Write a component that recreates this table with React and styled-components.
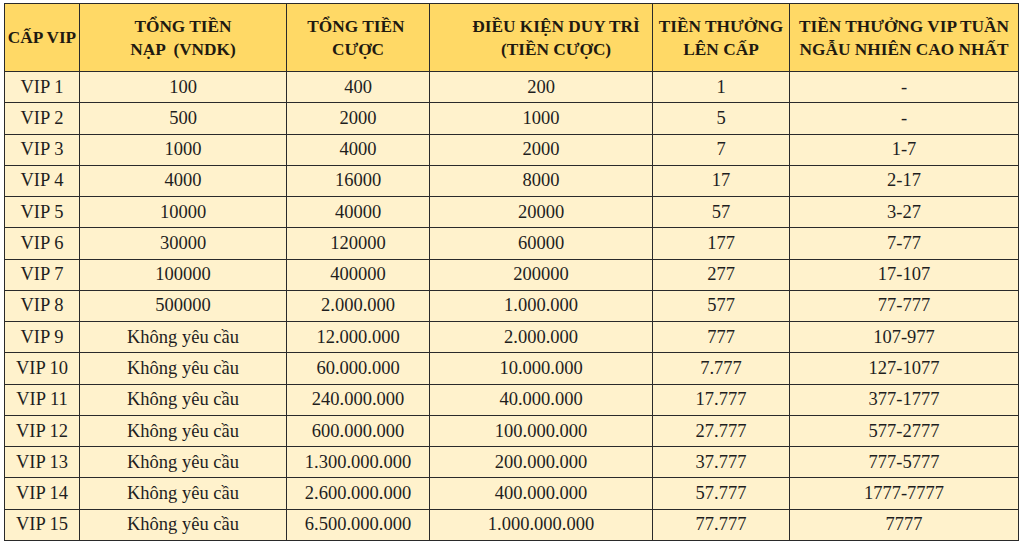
import React from "react";
import styled, { createGlobalStyle } from "styled-components";

const SERIF = `"Liberation Serif", "Times New Roman", "DejaVu Serif", serif`;

const Global = createGlobalStyle`
  html, body { margin: 0; padding: 0; background: #ffffff; }
  body { font-family: ${SERIF}; color: #1e1e1e; }
`;

const Page = styled.div`
  padding: 3px 5px 0 4px;
`;

const Table = styled.table`
  border-collapse: collapse;
  table-layout: fixed;
  width: 1015px;
  border: 1px solid #2a2a2a;
  font-family: ${SERIF};
`;

const HeadRow = styled.tr`
  height: 68px;
  background: #ffd966;
`;

const HeadCell = styled.th`
  border: 1px solid #2a2a2a;
  font-family: ${SERIF};
  font-size: 17.3px;
  font-weight: bold;
  line-height: 23px;
  text-align: center;
  vertical-align: middle;
  padding: 0 0 0 ${(p) => p.$shift || 0}px;
  white-space: pre;
  overflow: visible;
  color: #1f1a10;
`;

const Row = styled.tr`
  height: 31.27px;
  background: #fff2cc;
`;

const Cell = styled.td`
  border: 1px solid #2a2a2a;
  font-family: ${SERIF};
  font-size: 18.5px;
  text-align: center;
  vertical-align: middle;
  padding: 0;
  color: #1e1e1e;
  white-space: nowrap;
`;

const widths = [75, 207, 143, 223, 137, 229];

const headers = [
  { t: "CẤP VIP" },
  { t: "TỔNG TIỀN\nNẠP  (VNDK)" },
  { t: "TỔNG TIỀN \nCƯỢC" },
  { t: "ĐIỀU KIỆN DUY TRÌ\n(TIỀN CƯỢC)", shift: 30 },
  { t: "TIỀN THƯỞNG\nLÊN CẤP" },
  { t: "TIỀN THƯỞNG VIP TUẦN\nNGẪU NHIÊN CAO NHẤT" },
];

const NR = "Không yêu cầu";
const rows = [
  ["VIP 1", "100", "400", "200", "1", "-"],
  ["VIP 2", "500", "2000", "1000", "5", "-"],
  ["VIP 3", "1000", "4000", "2000", "7", "1-7"],
  ["VIP 4", "4000", "16000", "8000", "17", "2-17"],
  ["VIP 5", "10000", "40000", "20000", "57", "3-27"],
  ["VIP 6", "30000", "120000", "60000", "177", "7-77"],
  ["VIP 7", "100000", "400000", "200000", "277", "17-107"],
  ["VIP 8", "500000", "2.000.000", "1.000.000", "577", "77-777"],
  ["VIP 9", NR, "12.000.000", "2.000.000", "777", "107-977"],
  ["VIP 10", NR, "60.000.000", "10.000.000", "7.777", "127-1077"],
  ["VIP 11", NR, "240.000.000", "40.000.000", "17.777", "377-1777"],
  ["VIP 12", NR, "600.000.000", "100.000.000", "27.777", "577-2777"],
  ["VIP 13", NR, "1.300.000.000", "200.000.000", "37.777", "777-5777"],
  ["VIP 14", NR, "2.600.000.000", "400.000.000", "57.777", "1777-7777"],
  ["VIP 15", NR, "6.500.000.000", "1.000.000.000", "77.777", "7777"],
];

export default function App() {
  return (
    <Page>
      <Global />
      <Table>
        <colgroup>
          {widths.map((w, i) => (
            <col key={i} style={{ width: w }} />
          ))}
        </colgroup>
        <thead>
          <HeadRow>
            {headers.map((h, i) => (
              <HeadCell key={i} $shift={h.shift}>
                {h.t}
              </HeadCell>
            ))}
          </HeadRow>
        </thead>
        <tbody>
          {rows.map((r, i) => (
            <Row key={i}>
              {r.map((c, j) => (
                <Cell key={j}>{c}</Cell>
              ))}
            </Row>
          ))}
        </tbody>
      </Table>
    </Page>
  );
}
